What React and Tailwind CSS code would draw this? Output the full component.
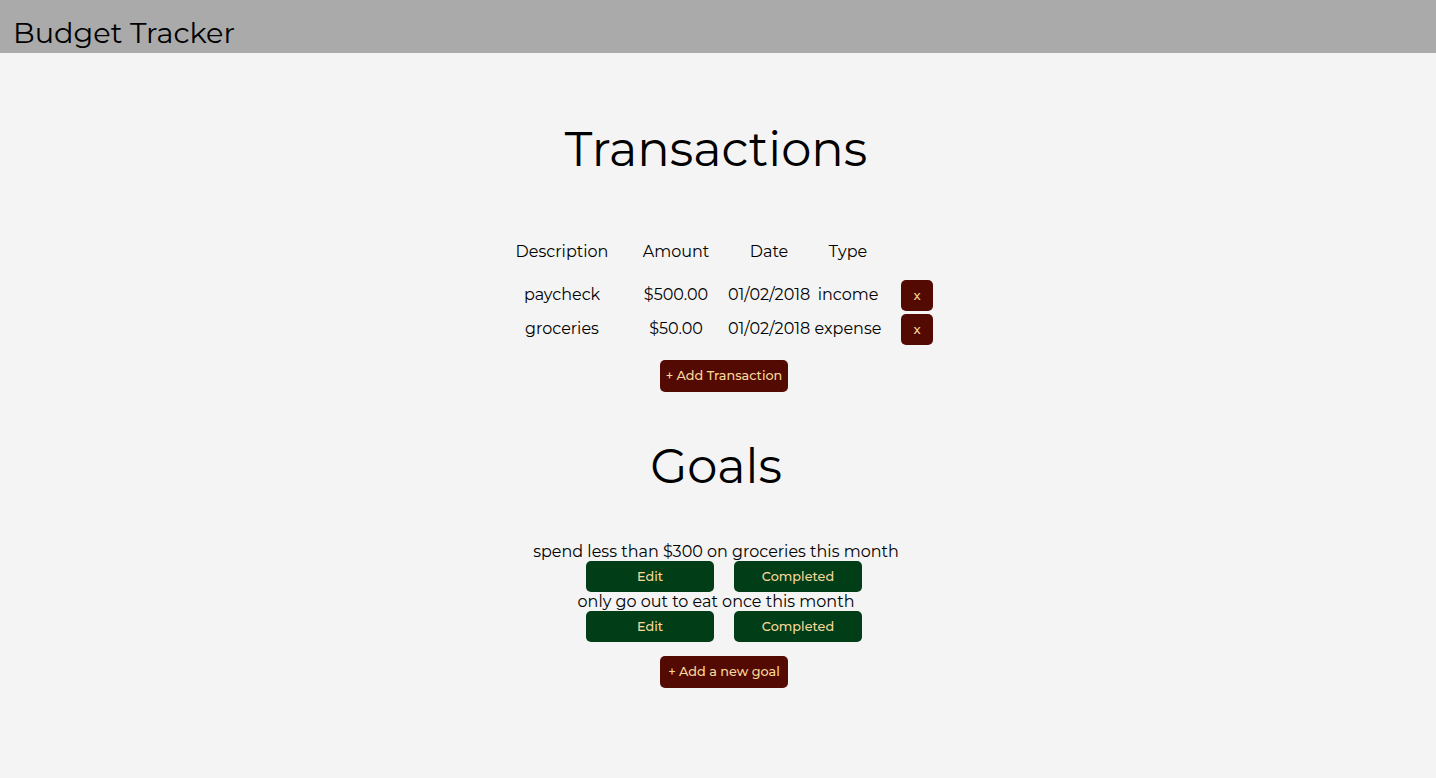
import React from "react";

const rows = [
  { d: "paycheck", a: "$500.00", dt: "01/02/2018", t: "income" },
  { d: "groceries", a: "$50.00", dt: "01/02/2018", t: "expense" },
];

const goals = [
  "spend less than $300 on groceries this month",
  "only go out to eat once this month",
];

export default function App() {
  return (
    <div className="min-h-[778px] flex flex-col bg-[#f4f4f4] text-black font-['Montserrat','DejaVu_Sans',sans-serif]">
      <header className="h-[53px] bg-[#aaaaaa] px-[13px] pt-[15px]">
        <h1 className="text-[28.8px] leading-[36px]">Budget Tracker</h1>
      </header>
      <main className="flex flex-col items-center flex-1 pr-[4px]">
        <h2 className="mt-[60px] text-[48px] leading-[72px]">Transactions</h2>
        <div className="ml-4 mt-[55px] flex flex-col text-[16px]">
          <div className="grid grid-cols-[124px_104px_82px_76px_62px] h-[22px] items-center text-center whitespace-nowrap">
            <div>Description</div>
            <div>Amount</div>
            <div>Date</div>
            <div>Type</div>
            <div></div>
          </div>
          <div className="mt-[16px] flex flex-col">
            {rows.map((r) => (
              <div key={r.d} className="grid grid-cols-[124px_104px_82px_76px_62px] h-[34px] items-center text-center whitespace-nowrap">
                <div>{r.d}</div>
                <div>{r.a}</div>
                <div>{r.dt}</div>
                <div>{r.t}</div>
                <div className="flex justify-center">
                  <button className="w-[32px] h-[31px] rounded-[5px] bg-[#530a02] text-[#f8d99b] text-[13px] font-medium leading-none">x</button>
                </div>
              </div>
            ))}
          </div>
        </div>
        <button className="ml-4 mt-[14px] w-[128px] h-[32px] rounded-[5px] bg-[#530a02] text-[#f8d99b] text-[12.8px] font-medium whitespace-nowrap">+ Add Transaction</button>
        <h2 className="mt-[38px] text-[48px] leading-[72px]">Goals</h2>
        <div className="mt-[40px] flex flex-col items-center">
          {goals.map((g) => (
            <div key={g} className="flex flex-col items-center">
              <div className="text-[16px] leading-[19px] whitespace-nowrap">{g}</div>
              <div className="ml-4 flex gap-[20px]">
                <button className="w-[128px] h-[31px] rounded-[5px] bg-[#013d17] text-[#f8d99b] text-[12.8px] font-medium">Edit</button>
                <button className="w-[128px] h-[31px] rounded-[5px] bg-[#013d17] text-[#f8d99b] text-[12.8px] font-medium">Completed</button>
              </div>
            </div>
          ))}
        </div>
        <button className="ml-4 mt-[14px] w-[128px] h-[32px] rounded-[5px] bg-[#530a02] text-[#f8d99b] text-[12.8px] font-medium whitespace-nowrap">+ Add a new goal</button>
      </main>
    </div>
  );
}
